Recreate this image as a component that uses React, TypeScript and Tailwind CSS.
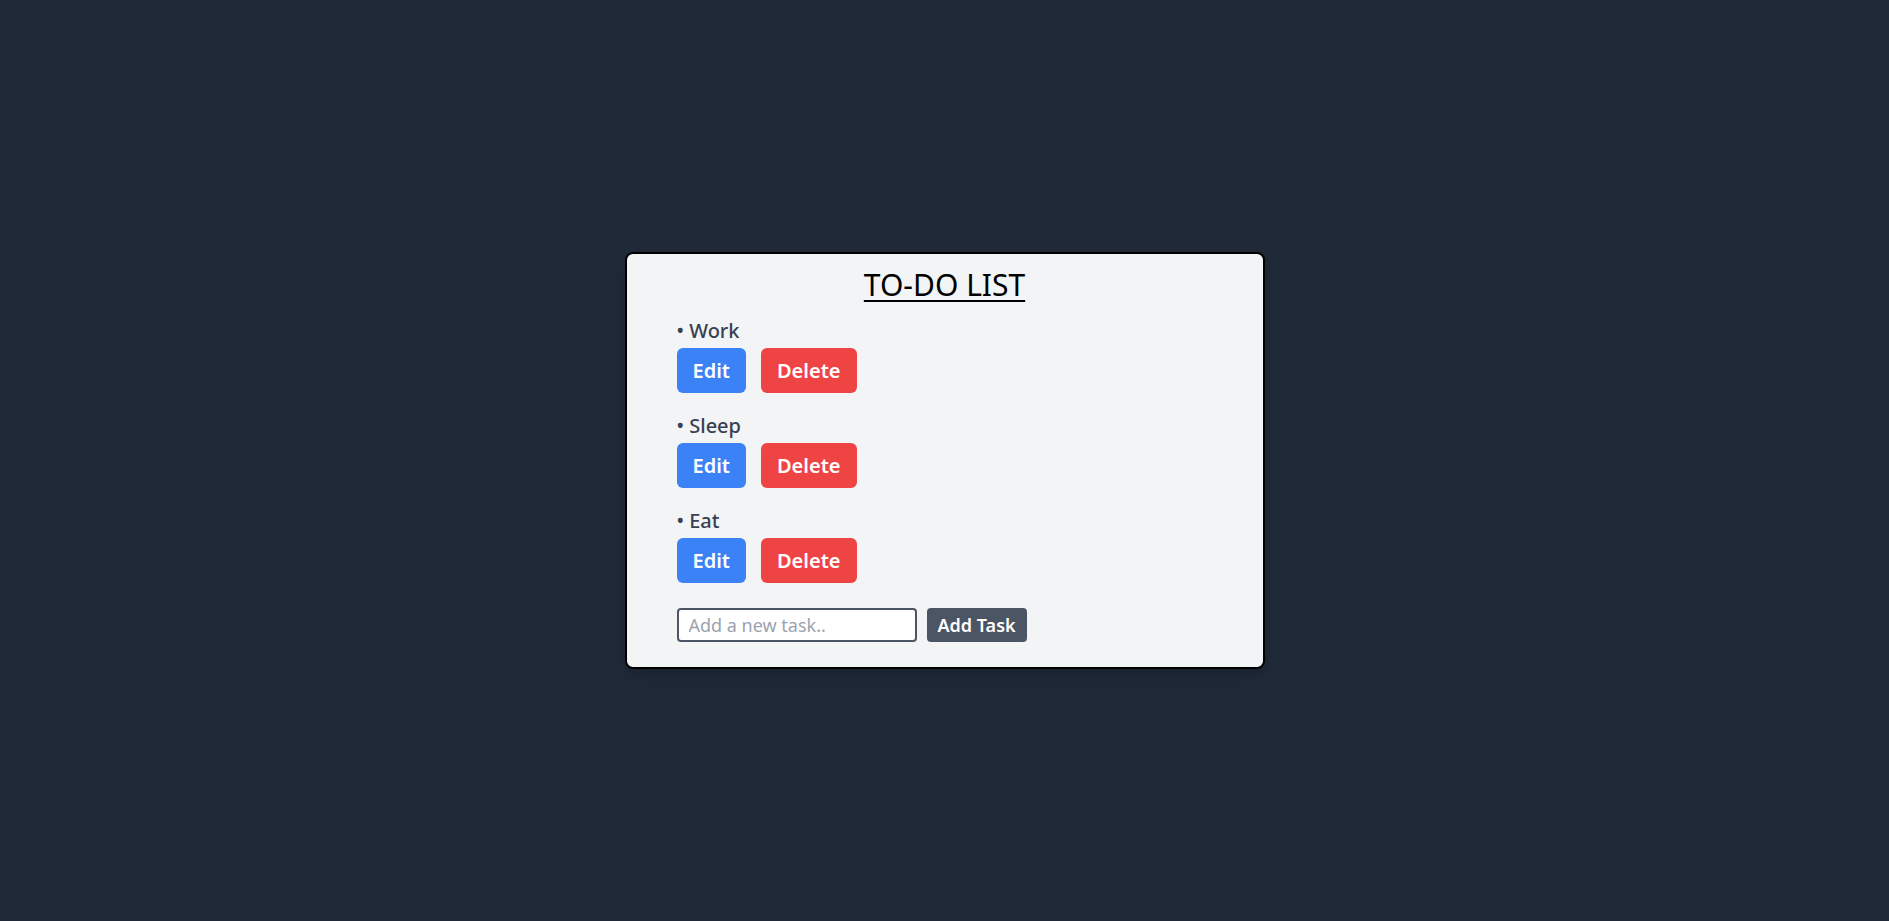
import { useState } from "react";

type Task = { id: number; text: string };

const App = () => {
  const [tasks, setTasks] = useState<Task[]>([
    { id: 1, text: "Work" },
    { id: 2, text: "Sleep" },
    { id: 3, text: "Eat" },
  ]);
  const [input, setInput] = useState("");

  const addTask = () => {
    if (!input.trim()) return;
    setTasks([...tasks, { id: Date.now(), text: input.trim() }]);
    setInput("");
  };

  const editTask = (id: number) => {
    const text = window.prompt("Edit task");
    if (text) setTasks(tasks.map((t) => (t.id === id ? { ...t, text } : t)));
  };

  const deleteTask = (id: number) => {
    setTasks(tasks.filter((t) => t.id !== id));
  };

  return (
    <div
      className="min-h-screen bg-[#1f2937] flex items-center justify-center"
      style={{ fontFamily: '"Noto Sans", "Open Sans", sans-serif' }}
    >
      <div className="w-[640px] bg-[#f3f4f6] border-2 border-black rounded-lg shadow-lg pt-[13px] pb-[25px] pl-[50px] pr-6">
        <h1 className="text-center text-3xl leading-9 text-black underline decoration-2 underline-offset-4 pr-[26px]">
          TO-DO LIST
        </h1>
        <ul className="mt-[14px] flex flex-col gap-[19px]">
          {tasks.map((task) => (
            <li key={task.id}>
              <div className="text-xl leading-7 font-medium text-[#374151]">
                • {task.text}
              </div>
              <div className="mt-[3px] flex gap-[15px]">
                <button
                  onClick={() => editTask(task.id)}
                  className="h-[45px] px-4 bg-[#3b82f6] text-white text-xl font-semibold rounded-md"
                >
                  Edit
                </button>
                <button
                  onClick={() => deleteTask(task.id)}
                  className="h-[45px] px-4 bg-[#ef4444] text-white text-xl font-semibold rounded-md"
                >
                  Delete
                </button>
              </div>
            </li>
          ))}
        </ul>
        <div className="mt-[25px] flex items-center gap-2.5">
          <input
            type="text"
            value={input}
            onChange={(e) => setInput(e.target.value)}
            placeholder="Add a new task.."
            className="w-60 h-[34px] border-2 border-[#4b5563] rounded-sm bg-white px-2.5 text-lg text-[#374151] placeholder:text-[#9ca3af] outline-none"
          />
          <button
            onClick={addTask}
            className="h-[34px] px-[11px] bg-[#4b5563] text-white text-lg font-semibold rounded-sm"
          >
            Add Task
          </button>
        </div>
      </div>
    </div>
  );
};

export default App;
